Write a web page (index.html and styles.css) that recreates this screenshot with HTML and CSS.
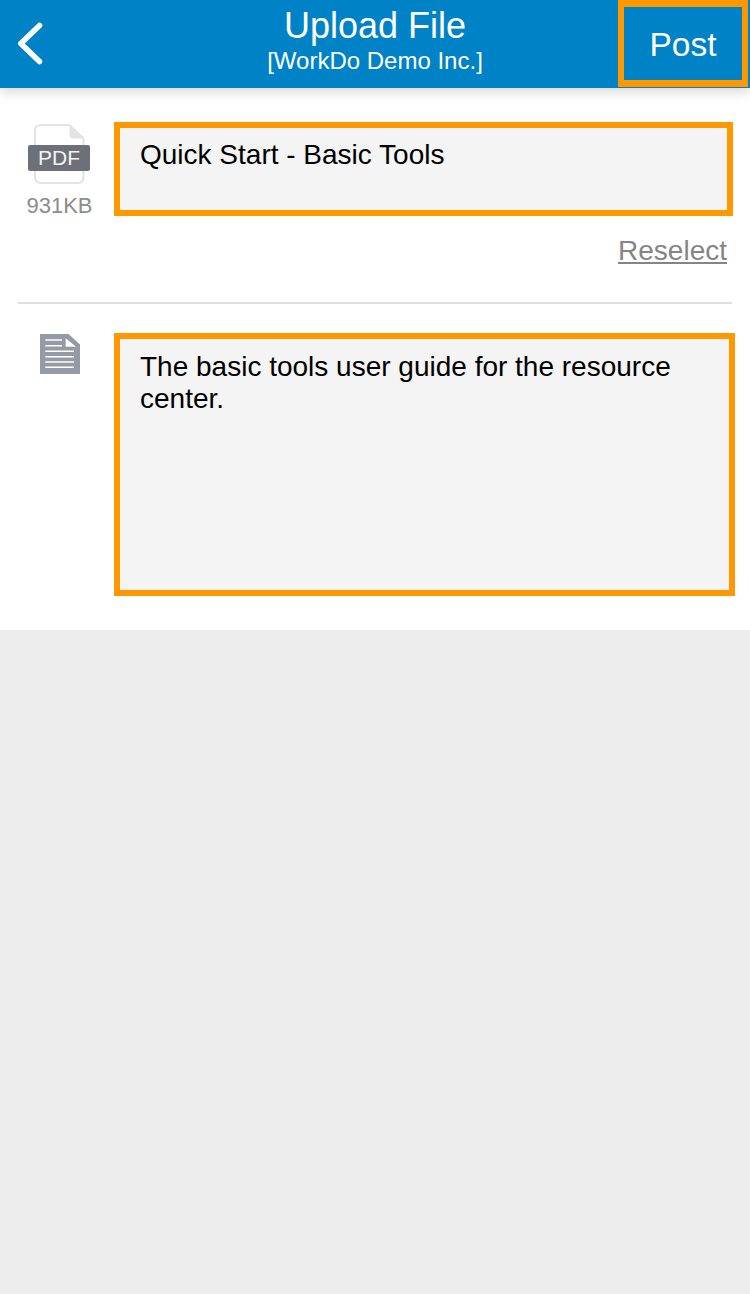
FILE: index.html
```html
<!DOCTYPE html>
<html lang="en">
<head>
<meta charset="utf-8">
<title>Upload File</title>
<link rel="stylesheet" href="styles.css">
</head>
<body>
<div class="app">
  <header class="topbar">
    <div class="back">
      <svg width="30" height="48" viewBox="0 0 30 48"><path d="M25.500 6.500 L6.800 24.500 L25.500 42.500" fill="none" stroke="#fff" stroke-width="5.500" stroke-linecap="round" stroke-linejoin="round"/></svg>
    </div>
    <div class="titles">
      <div class="title">Upload File</div>
      <div class="subtitle">[WorkDo Demo Inc.]</div>
    </div>
    <div class="post">Post</div>
  </header>
  <main class="form">
    <section class="file-row">
      <div class="file-side">
        <div class="pdf-icon">
          <svg width="52" height="62" viewBox="0 0 52 62"><path d="M7.500 1 H35.500 L49.500 14.500 V53 Q49.500 59 43.500 59 H7.500 Q1 59 1 53 V7 Q1 1 7.500 1 Z" fill="#fff" stroke="#e3e3e3" stroke-width="2"/><path d="M35.500 1 V10.500 Q35.500 14.500 39.500 14.500 H49.500 Z" fill="#e3e3e3"/></svg>
          <span class="pdf-tag">PDF</span>
        </div>
        <div class="file-size">931KB</div>
      </div>
      <div class="file-main">
        <div class="field field-title">Quick Start - Basic Tools</div>
        <a class="reselect">Reselect</a>
      </div>
    </section>
    <hr class="divider">
    <section class="desc-row">
      <div class="desc-side">
        <svg width="40" height="40" viewBox="0 0 40 40"><path d="M0 0 H28.500 L40 10.500 V40 H0 Z" fill="#949aa6"/><path d="M25.700 4.300 L36 12.700 H25.700 Z" fill="#fff"/><path d="M5.300 6 H22 M5.300 11.700 H22 M5.300 17.300 H34 M5.300 22.700 H34 M5.300 28 H34 M5.300 33.300 H34" stroke="#fff" stroke-width="1.500" fill="none"/></svg>
      </div>
      <div class="field field-desc">The basic tools user guide for the resource center.</div>
    </section>
  </main>
</div>
</body>
</html>
```
FILE: styles.css
```css
* { box-sizing: border-box; }
html, body { margin: 0; padding: 0; }
body { background: #ededed; font-family: "Liberation Sans", Arial, sans-serif; }
.app { width: 750px; height: 1294px; display: flex; flex-direction: column; overflow: hidden; }
.topbar { position: relative; z-index: 1; height: 88px; background: #0082c6; color: #fff; display: flex; align-items: flex-start; box-shadow: 0 3px 12px rgba(0,0,0,.18); }
.back { width: 132px; height: 88px; padding: 19px 0 0 14px; flex: none; }
.back svg { display: block; }
.titles { flex: 1; text-align: center; }
.title { font-size: 36px; line-height: 40px; margin-top: 6px; }
.subtitle { font-size: 24px; line-height: 28px; margin-top: 1px; }
.post { width: 130px; height: 87px; margin-right: 2px; padding-top: 2px; flex: none; border: solid #ff9800; border-width: 7px 6px; font-size: 33.500px; display: flex; align-items: center; justify-content: center; }
.form { background: #fff; height: 542px; padding: 34px 15px 0 18px; }
.file-row { display: flex; height: 180px; }
.file-side { width: 96px; display: flex; flex-direction: column; align-items: center; padding: 2px 13px 0 0; flex: none; }
.pdf-icon { position: relative; width: 52px; height: 62px; }
.pdf-icon svg { display: block; }
.pdf-tag { position: absolute; left: -5.500px; top: 21px; width: 62px; height: 26px; background: #6d7078; border-radius: 2px; color: #f4f4f4; font-size: 21px; line-height: 26px; text-align: center; }
.file-size { margin-top: 7px; font-size: 22px; line-height: 26px; color: #8c8c8c; }
.file-main { flex: 1; display: flex; flex-direction: column; align-items: flex-end; margin-right: 2px; }
.field { width: 100%; background: #f4f4f4; border: 6px solid #ff9800; color: #000; font-size: 28px; line-height: 32px; padding: 11px 20px 0; }
.field-title { height: 94px; }
.reselect { margin-top: 19px; margin-right: 6px; font-size: 28px; line-height: 32px; color: #858585; text-decoration: underline; }
.divider { margin: 0; width: 714px; height: 2px; border: 0; background: #dedede; }
.desc-row { display: flex; margin-top: 29px; margin-right: -2px; }
.desc-side { width: 96px; padding: 1px 0 0 22px; flex: none; }
.desc-side svg { display: block; }
.field-desc { height: 263px; width: 621px; padding-top: 12px; }
```
